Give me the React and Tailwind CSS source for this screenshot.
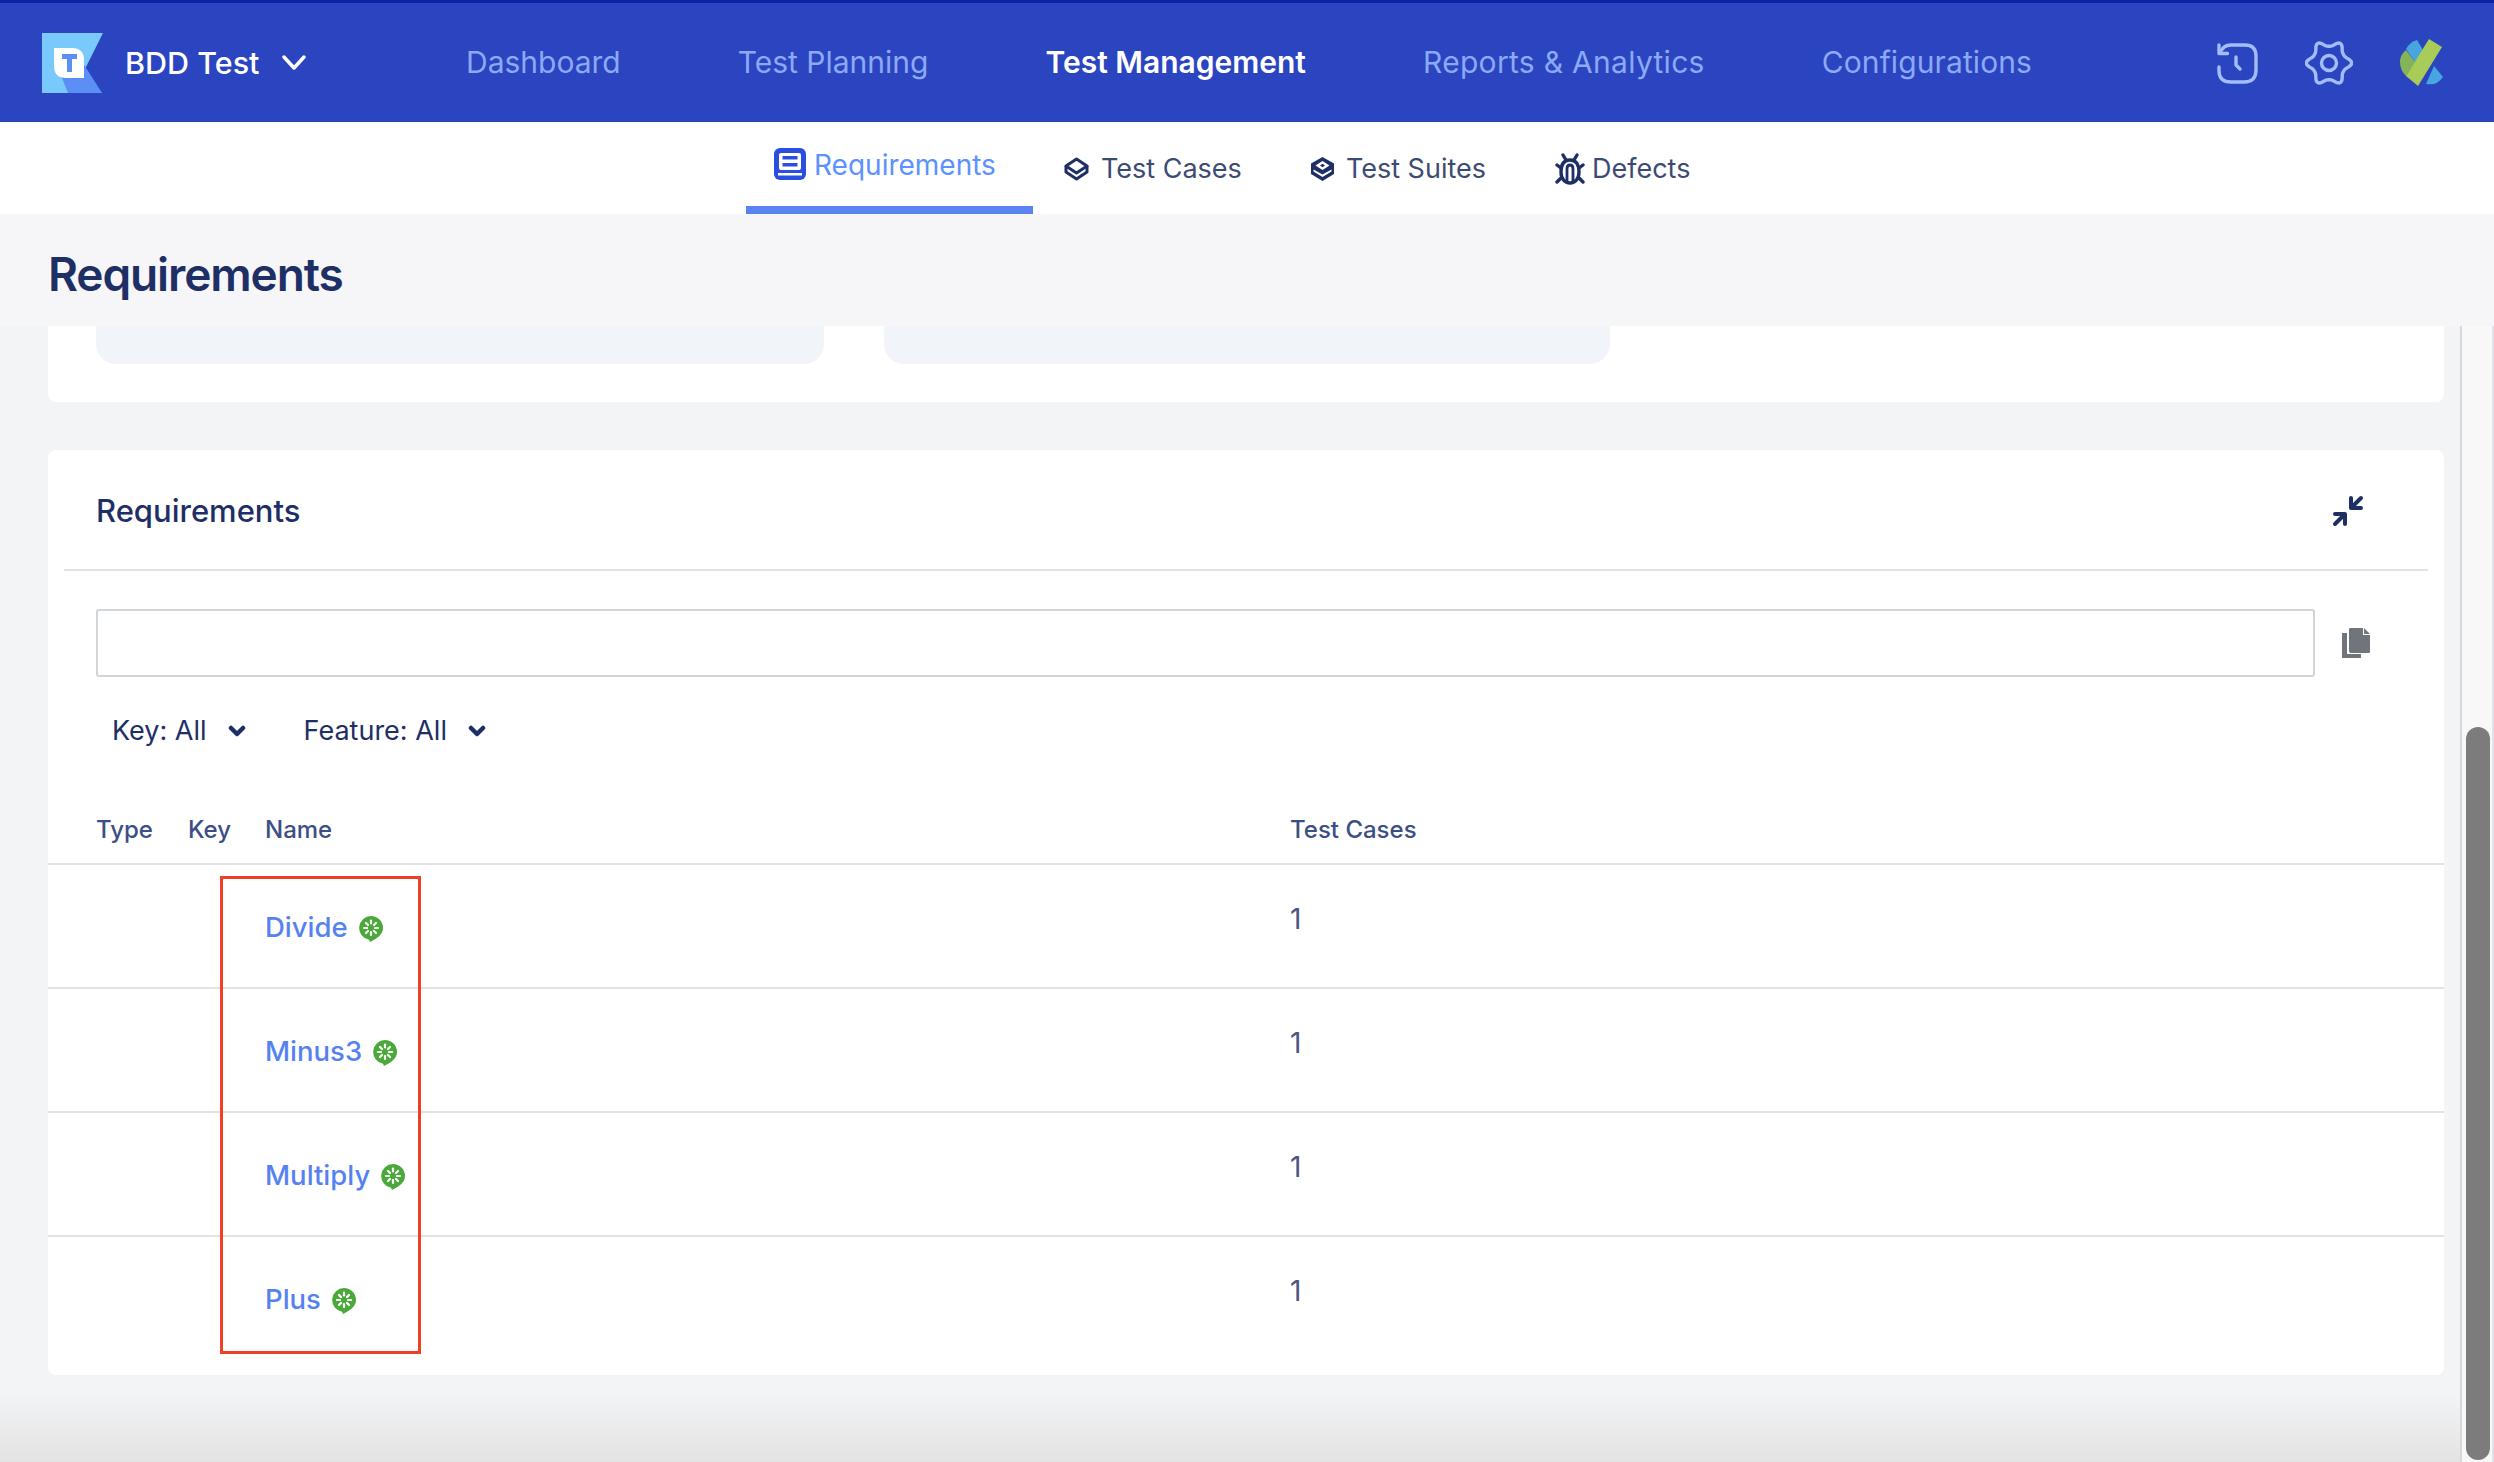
import React from "react";

const gearPath = (() => {
  const pts = [];
  for (let i = 0; i < 120; i++) {
    const t = (i / 120) * Math.PI * 2;
    const r = 18.8 + 2.9 * Math.cos(6 * t) + 0.5 * Math.cos(12 * t);
    pts.push(`${(24 + r * Math.cos(t) * 1.02).toFixed(2)} ${(23 + r * Math.sin(t) * 1.02).toFixed(2)}`);
  }
  return `M${pts.join("L")}Z`;
})();

const Logo = () => (
  <svg width="61" height="60" viewBox="0 0 61 60" className="shrink-0">
    <path d="M0 0H61L42 38L60 60H0Z" fill="#79c9fd" />
    <path d="M14 30H41L60 60H26Z" fill="#5b8ff5" />
    <path d="M12 15H30Q42 15 42 27V45H24Q12 45 12 33Z" fill="#fff" />
    <path d="M20 21H35V26H30V39H25V26H20Z" fill="#5b8ff5" />
  </svg>
);

const HistoryIcon = () => (
  <svg width="42" height="42" viewBox="0 0 42 42" fill="none" stroke="#a3bdfb" strokeWidth="3.4" strokeLinecap="round" strokeLinejoin="round">
    <path d="M4 11Q7 3 15 3H29Q40 3 40 14V28Q40 40 28 40H15Q3 40 3 29V25" />
    <path d="M3 3V11.5H11.5" />
    <path d="M20 15V23L24 27" />
  </svg>
);

const GearIcon = () => (
  <svg width="48" height="46" viewBox="0 0 48 46" fill="none" stroke="#a3bdfb" strokeWidth="3.4" strokeLinejoin="round">
    <path d={gearPath} />
    <circle cx="24" cy="23" r="7.500" />
  </svg>
);

const BrandX = () => (
  <svg width="44" height="48" viewBox="0 0 44 48">
    <path d="M6 10Q10 3 17 1L23 11L15 23Z" fill="#47a5df" />
    <path d="M6 11L15 23L6 37Q0 31 0 23Q0 16 6 11Z" fill="#83b556" />
    <path d="M29 0L42 8L18 47L6 37Z" fill="#a9cb57" />
    <path d="M34 27L43 38Q37 47 26 45Z" fill="#47a5df" />
  </svg>
);

const ReqIcon = () => (
  <svg width="32" height="32" viewBox="0 0 32 32">
    <rect width="32" height="32" rx="6" fill="#2a4ee0" />
    <rect x="5" y="5" width="22" height="17" rx="2" fill="#fff" />
    <rect x="8.500" y="8" width="15" height="3.500" fill="#2a4ee0" />
    <rect x="8.500" y="15" width="15" height="3.500" fill="#2a4ee0" />
    <rect x="4" y="25" width="24" height="2.500" fill="#fff" />
  </svg>
);

const CasesIcon = () => (
  <svg width="25" height="24" viewBox="0 0 25 24" fill="none" stroke="#1e2f66" strokeWidth="3" strokeLinejoin="round">
    <path d="M12.500 2L23 9L12.500 16L2 9Z" />
    <path d="M2 9V15L12.500 22L23 15V9" />
  </svg>
);

const SuitesIcon = () => (
  <svg width="25" height="24" viewBox="0 0 25 24">
    <path d="M12.500 0L24 6.500V17L12.500 24L1 17V6.500Z" fill="#1e2f66" />
    <path d="M12.500 4L19.500 8.500L12.500 13L5.500 8.500Z" fill="#fff" />
    <path d="M12.500 6.800L15 8.500L12.500 10.200L10 8.500Z" fill="#1e2f66" />
    <path d="M3.500 12.500L12.500 17.500L21.500 12.500V14.500L12.500 20L3.500 14.500Z" fill="#fff" />
  </svg>
);

const BugIcon = () => (
  <svg width="30" height="32" viewBox="0 0 30 32" fill="none" stroke="#1e2f66" strokeWidth="3.400" strokeLinecap="round" strokeLinejoin="round">
    <path d="M15 7C8 7 6 13 6 19C6 26 10 30 15 30C20 30 24 26 24 19C24 13 22 7 15 7Z" />
    <path d="M12 28V16Q12 12 15 12Q18 12 18 16V28" strokeWidth="2.800" />
    <path d="M8 2L11 7M22 2L19 7M2 12L6 15M28 12L24 15M2 29L6 25M28 29L24 25" />
  </svg>
);

const Cucumber = () => (
  <svg width="24" height="26" viewBox="0 0 24 26" className="mt-[4px] shrink-0">
    <path d="M12 0A12 12 0 0 1 24 12C24 18 19 22 11 26L10 23.800A12 12 0 0 1 12 0Z" fill="#4aa93a" />
    <g stroke="#fff" strokeWidth="2.200" strokeLinecap="round">
      <path d="M12 4.500V7.500" />
      <path d="M12 16V19" />
      <path d="M5 12H8" />
      <path d="M16 12H19" />
      <path d="M7 7L9 9" />
      <path d="M17 7L15 9" />
      <path d="M7 17L9 15" />
      <path d="M17 17L15 15" />
    </g>
  </svg>
);

const Chev = () => (
  <svg width="18" height="12" viewBox="0 0 18 12" fill="none" stroke="#1e2f66" strokeWidth="4.500" strokeLinecap="round" strokeLinejoin="round">
    <path d="M3 3L9 9L15 3" />
  </svg>
);

const Compress = () => (
  <svg width="32" height="32" viewBox="0 0 32 32" fill="none" stroke="#1e2f66" strokeWidth="4" strokeLinecap="round" strokeLinejoin="round">
    <path d="M19 3V13H29M20 12L29 3" />
    <path d="M13 29V19H3M12 20L3 29" />
  </svg>
);

const Copy = () => (
  <svg width="28" height="30" viewBox="0 0 28 30" fill="#70757c">
    <path d="M8 0H21V7H28V24Q28 25 27 25H9Q7 25 7 23V1Z" />
    <path d="M22 0L28 6H22Z" />
    <path d="M0 5H5V26H19V30H0Z" />
  </svg>
);

const rows = [
  { name: "Divide" },
  { name: "Minus3" },
  { name: "Multiply" },
  { name: "Plus" },
];

export default function App() {
  return (
    <div className="relative flex h-[1462px] w-[2494px] flex-col overflow-hidden bg-[#f6f6f8] font-['Inter',sans-serif]">
      <header className="flex h-[122px] shrink-0 items-center border-t-[3px] border-[#0d23a5] bg-[#2b44c0] pl-[42px]">
        <Logo />
        <span className="ml-[22px] w-[157px] text-[30.5px] font-medium text-white">BDD Test</span>
        <svg width="24" height="15" viewBox="0 0 24 15" fill="none" stroke="#fff" strokeWidth="3.500" strokeLinecap="round" strokeLinejoin="round">
          <path d="M2 2L12 13L22 2" />
        </svg>
        <nav className="ml-[160px] flex items-center gap-[117px] text-[30px] text-[#8ba9f6]">
          <span>Dashboard</span>
          <span>Test Planning</span>
          <span className="font-semibold text-white">Test Management</span>
          <span className="tracking-[0.3px]">Reports &amp; Analytics</span>
          <span className="tracking-[0.1px]">Configurations</span>
        </nav>
        <div className="ml-auto mr-[50px] flex items-center gap-[47px]">
          <HistoryIcon />
          <GearIcon />
          <BrandX />
        </div>
      </header>

      <div className="flex h-[92px] shrink-0 items-stretch bg-white pl-[746px] text-[27px] text-[#3d4a73]">
        <div className="flex w-[287px] items-start gap-[8px] border-b-[8px] border-[#5a82f0] pl-[28px] pt-[26px] text-[28px] text-[#5c91ff]">
          <ReqIcon />
          <span className="leading-[34px]">Requirements</span>
        </div>
        <div className="ml-[31px] flex items-center gap-[12px] pt-[2px]">
          <CasesIcon />
          <span>Test Cases</span>
        </div>
        <div className="ml-[68px] flex items-center gap-[11px] pt-[2px]">
          <SuitesIcon />
          <span>Test Suites</span>
        </div>
        <div className="ml-[69px] flex items-center gap-[7px] pt-[2px]">
          <BugIcon />
          <span>Defects</span>
        </div>
      </div>

      <div className="flex h-[112px] shrink-0 items-center bg-[#f6f6f8] pl-[48px] pr-[2px] pt-[9px]">
        <h1 className="text-[46px] font-semibold tracking-[-1.1px] text-[#1e2f66]">Requirements</h1>
      </div>

      <div className="flex min-h-0 flex-1">
        <main className="relative w-[2460px] shrink-0 overflow-hidden bg-[#f3f4f6] pl-[48px] pr-[16px]">
          <section className="flex h-[76px] items-start gap-[60px] rounded-b-lg bg-white px-[48px]">
            <div className="h-[38px] w-[728px] rounded-b-[20px] bg-[#f1f4f9]" />
            <div className="h-[38px] w-[726px] rounded-b-[20px] bg-[#f1f4f9]" />
          </section>

          <section className="mt-[48px] h-[925px] rounded-lg bg-white text-[#1e2f66]">
            <div className="mx-[16px] flex h-[121px] items-center justify-between border-b-2 border-[#dfe2e6] pl-[32px] pr-[64px] pt-[3px]">
              <h2 className="text-[31px] font-medium">Requirements</h2>
              <Compress />
            </div>

            <div className="flex items-center pl-[48px] pt-[38px]">
              <div className="h-[68px] w-[2219px] rounded-[3px] border-2 border-[#d0d5da] bg-white" />
              <span className="ml-[27px]"><Copy /></span>
            </div>

            <div className="mt-[27px] flex h-[54px] items-center pl-[64px] text-[27px]">
              <span>Key: All</span>
              <span className="ml-[21px]"><Chev /></span>
              <span className="ml-[58px]">Feature: All</span>
              <span className="ml-[21px]"><Chev /></span>
            </div>

            <div className="mt-[48px] flex h-[59px] items-center border-b-2 border-[#dfe2e6] pb-[10px] pl-[48px] text-[24px] font-medium text-[#3b4f85]">
              <span className="w-[92px]">Type</span>
              <span className="w-[77px]">Key</span>
              <span className="w-[1025px]">Name</span>
              <span>Test Cases</span>
            </div>

            {rows.map((r, i) => (
              <div key={r.name} className={`flex h-[124px] items-start pl-[217px] ${i < 3 ? "border-b-2 border-[#dfe2e6]" : ""}`}>
                <div className="flex w-[1025px] items-center gap-[11px] pt-[44px]">
                  <span className="text-[27.5px] font-medium leading-[36px] text-[#5682f1]">{r.name}</span>
                  <Cucumber />
                </div>
                <span className="pt-[36px] text-[28px] leading-[36px] text-[#4a5680]">1</span>
              </div>
            ))}
          </section>

          <div className="pointer-events-none absolute inset-x-0 bottom-0 h-[70px] bg-gradient-to-b from-[#e3e3e300] to-[#e3e3e3]" />
        </main>

        <aside className="w-[34px] shrink-0 border-x-2 border-l-[#d8d8da] border-r-[#e0e3e9] bg-[#f8f8f9] pl-[4px] pr-[2px] pt-[401px]">
          <div className="h-[733px] rounded-[12px] bg-[#7c7c7c]" />
        </aside>
      </div>

      <div className="pointer-events-none absolute left-[220px] top-[876px] h-[478px] w-[201px] border-[3px] border-[#ee4028]" />
    </div>
  );
}
